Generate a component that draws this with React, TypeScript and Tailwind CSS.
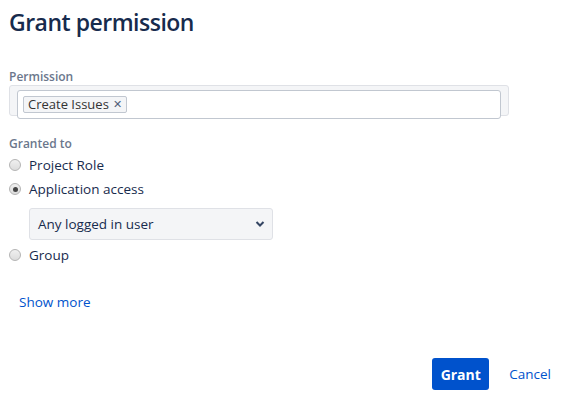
import React, { useState } from 'react';

const font = { fontFamily: '"Open Sans", "Noto Sans", Arial, sans-serif' };

function Radio({ checked, label, onSelect }: { checked: boolean; label: string; onSelect: () => void }) {
    return (
        <label className="flex items-center h-[24px] cursor-pointer" onClick={onSelect}>
            <span className="w-[12px] h-[12px] rounded-full border border-[#b4b4b4] bg-gradient-to-b from-[#f0f0f0] to-[#dcdcdc] flex items-center justify-center">
                {checked && <span className="w-[5px] h-[5px] rounded-full bg-[#444]" />}
            </span>
            <span className="ml-[8px] text-[13.5px] leading-[20px] text-[#172b4d]">{label}</span>
        </label>
    );
}

export default function App() {
    const [granted, setGranted] = useState('app');

    return (
        <div className="w-[566px] h-[399px] bg-white pl-[9px] overflow-hidden" style={font}>
            <h1 className="pt-[8px] text-[23px] leading-[28px] font-semibold text-[#172b4d] tracking-[-0.5px]">Grant permission</h1>

            <div className="mt-[34px] text-[12px] leading-[14px] font-semibold text-[#6b778c]">Permission</div>
            <div className="mt-[1px] w-[500px] h-[31px] bg-[#f4f5f7] border border-[#dfe1e6] rounded-[3px] pl-[7px] pt-[4px]">
                <div className="w-[484px] h-[29px] bg-white border border-[#c1c7d0] rounded-[3px] flex items-center pl-[5px]">
                    <span className="h-[17px] flex items-center bg-[#f4f5f7] border border-[#c1c7d0] rounded-[2px] px-[4px] text-[13px] text-[#333]">
                        Create Issues
                        <span className="ml-[4px] text-[11px] text-[#505f79]">✕</span>
                    </span>
                </div>
            </div>

            <div className="mt-[21px] text-[12px] leading-[14px] font-semibold text-[#6b778c]">Granted to</div>
            <div className="mt-[2px] flex flex-col">
                <Radio checked={granted === 'role'} label="Project Role" onSelect={() => setGranted('role')} />
                <Radio checked={granted === 'app'} label="Application access" onSelect={() => setGranted('app')} />
                <div className="ml-[20px] mt-[7px] mb-[3px] w-[244px] h-[32px] bg-[#f4f5f7] border border-[#dfe1e6] rounded-[3px] flex items-center justify-between pl-[8px] pr-[7px]">
                    <span className="text-[13.5px] text-[#172b4d]">Any logged in user</span>
                    <svg width="10" height="8" viewBox="0 0 10 8">
                        <path d="M1.5 2 L5 5.5 L8.5 2" fill="none" stroke="#344563" strokeWidth="2" />
                    </svg>
                </div>
                <Radio checked={granted === 'group'} label="Group" onSelect={() => setGranted('group')} />
            </div>

            <a className="block mt-[25px] ml-[10px] text-[13.5px] leading-[20px] text-[#0052cc]" href="#">Show more</a>

            <div className="mt-[46px] flex items-center justify-end pr-[15px]">
                <button className="w-[57px] h-[32px] bg-[#0052cc] rounded-[3px] text-white text-[14px] font-bold">Grant</button>
                <button className="ml-[20px] text-[13.5px] text-[#0052cc]">Cancel</button>
            </div>
        </div>
    );
}
